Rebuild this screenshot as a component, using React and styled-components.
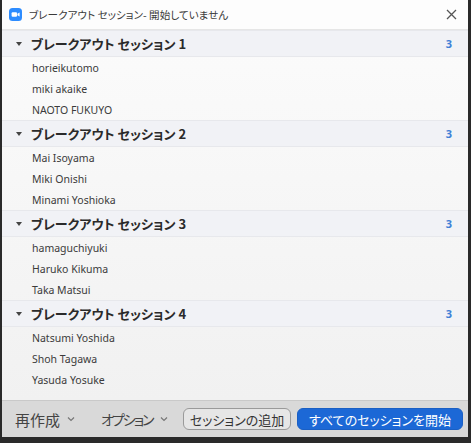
import React from "react";
import styled, { createGlobalStyle } from "styled-components";

const Global = createGlobalStyle`
  html, body { margin: 0; padding: 0; background: #1c1c1c; }
  body { width: 471px; height: 443px; overflow: hidden; }
  * { box-sizing: border-box; }
`;

const Frame = styled.div`
  width: 471px;
  height: 443px;
  padding: 0 5px 6px 2px;
  background: #2a2a2a;
  display: flex;
`;

const Win = styled.div`
  flex: 1;
  display: flex;
  flex-direction: column;
  background: #fafafa;
  font-family: "Noto Sans", "Noto Sans CJK JP", sans-serif;
  font-feature-settings: "palt";
  color: #333;
`;

const TitleBar = styled.div`
  height: 30px;
  flex: none;
  display: flex;
  align-items: center;
  padding: 0 10px 0 7px;
  background: #fdfdfd;
  border-bottom: 1px solid #e6e6e6;
`;

const Title = styled.div`
  margin-left: 7px;
  font-size: 10.6px;
  color: #3a3a3a;
  font-family: "Noto Sans CJK JP", sans-serif;
  white-space: nowrap;
  flex: 1;
`;

const Close = styled.div`
  width: 14px;
  height: 14px;
  display: flex;
  align-items: center;
  justify-content: center;
`;

const List = styled.div`
  flex: 1;
  display: flex;
  flex-direction: column;
  background: linear-gradient(#fbfbfb, #f1f1f1);
`;

const GroupHeader = styled.div`
  height: 27px;
  display: flex;
  align-items: center;
  padding: 0 16px 0 14px;
  background: #f1f2f6;
  border-top: 1px solid #e7e8ec;
  border-bottom: 1px solid #e7e8ec;
`;

const Caret = styled.div`
  width: 0;
  height: 0;
  border-left: 3px solid transparent;
  border-right: 3px solid transparent;
  border-top: 4px solid #444;
  margin-right: 9px;
`;

const GroupName = styled.div`
  flex: 1;
  font-family: "Noto Sans CJK JP", sans-serif;
  font-weight: 700;
  font-size: 13px;
  color: #2a2a2a;
  white-space: nowrap;
`;

const Count = styled.div`
  font-size: 11px;
  font-weight: 700;
  color: #3d7fd6;
`;

const Member = styled.div`
  height: 21px;
  display: flex;
  align-items: center;
  padding-left: 30px;
  font-size: 10.5px;
  color: #3b3b3b;
  white-space: nowrap;
`;

const Footer = styled.div`
  height: 37px;
  flex: none;
  display: flex;
  align-items: center;
  padding: 0 5px 0 13px;
  background: #d9d9d9;
  border-top: 1px solid #c9c9c9;
  font-family: "Noto Sans CJK JP", sans-serif;
`;

const Menu = styled.div`
  display: flex;
  align-items: center;
  gap: 7px;
  font-size: ${(p) => p.$fs}px;
  color: #444;
  width: ${(p) => p.$w}px;
  white-space: nowrap;
  flex: none;
`;

const MenuLabel = styled.span`
  letter-spacing: ${(p) => p.$ls || 0}px;
`;

const Btn = styled.div`
  height: 22px;
  flex: none;
  width: ${(p) => p.$w}px;
  display: flex;
  align-items: center;
  justify-content: center;
  border-radius: 6px;
  font-size: 13px;
  white-space: nowrap;
  background: ${(p) => (p.$primary ? "#1c68d6" : "#e6e6e6")};
  color: ${(p) => (p.$primary ? "#fff" : "#333")};
  border: 1px solid ${(p) => (p.$primary ? "#1a5fc4" : "#9a9a9a")};
  margin-left: ${(p) => p.$ml || 0}px;
`;

const Chevron = () => (
  <svg width="8" height="6" viewBox="0 0 8 6">
    <path d="M1 1.5 L4 4.5 L7 1.5" fill="none" stroke="#777" strokeWidth="1.2" />
  </svg>
);

const groups = [
  { name: "ブレークアウト セッション 1", members: ["horieikutomo", "miki akaike", "NAOTO FUKUYO"] },
  { name: "ブレークアウト セッション 2", members: ["Mai Isoyama", "Miki Onishi", "Minami Yoshioka"] },
  { name: "ブレークアウト セッション 3", members: ["hamaguchiyuki", "Haruko Kikuma", "Taka Matsui"] },
  { name: "ブレークアウト セッション 4", members: ["Natsumi Yoshida", "Shoh Tagawa", "Yasuda Yosuke"] },
];

export default function App() {
  return (
    <>
      <Global />
      <Frame>
        <Win>
          <TitleBar>
            <svg width="13" height="13" viewBox="0 0 13 13">
              <rect x="0" y="0" width="13" height="13" rx="3.5" fill="#2d8cff" />
              <rect x="2.6" y="4.2" width="5.4" height="4.6" rx="1" fill="#fff" />
              <path d="M8.4 5.8 L10.6 4.4 L10.6 8.6 L8.4 7.2 Z" fill="#fff" />
            </svg>
            <Title>ブレークアウト セッション- 開始していません</Title>
            <Close>
              <svg width="11" height="11" viewBox="0 0 11 11">
                <path d="M1 1 L10 10 M10 1 L1 10" stroke="#555" strokeWidth="1.3" />
              </svg>
            </Close>
          </TitleBar>
          <List>
            {groups.map((g) => (
              <React.Fragment key={g.name}>
                <GroupHeader>
                  <Caret />
                  <GroupName>{g.name}</GroupName>
                  <Count>{g.members.length}</Count>
                </GroupHeader>
                {g.members.map((m) => (
                  <Member key={m}>{m}</Member>
                ))}
              </React.Fragment>
            ))}
          </List>
          <Footer>
            <Menu $w={86} $fs={15}>
              <MenuLabel>再作成</MenuLabel>
              <Chevron />
            </Menu>
            <Menu $w={82} $fs={14}>
              <MenuLabel $ls={-2}>オプション</MenuLabel>
              <Chevron />
            </Menu>
            <Btn $w={108}>セッションの追加</Btn>
            <Btn $primary $w={166} $ml={6}>すべてのセッションを開始</Btn>
          </Footer>
        </Win>
      </Frame>
    </>
  );
}
